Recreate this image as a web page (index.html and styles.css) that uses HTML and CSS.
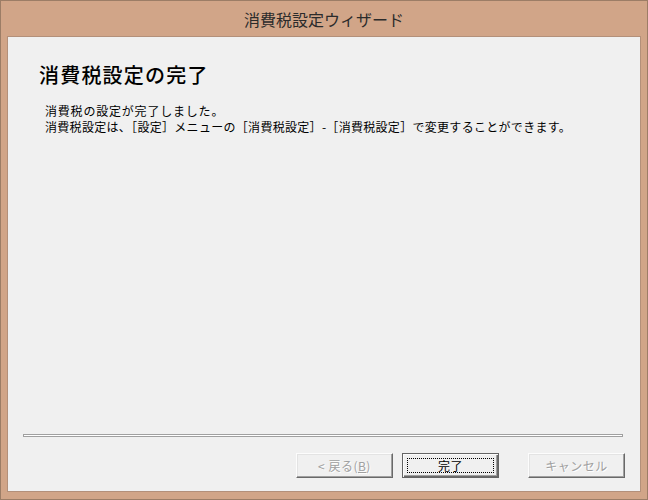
FILE: index.html
```
<!DOCTYPE html>
<html lang="ja">
<head>
<meta charset="utf-8">
<title>消費税設定ウィザード</title>
<link rel="stylesheet" href="styles.css">
</head>
<body>
<div class="window">
  <div class="titlebar">消費税設定ウィザード</div>
  <div class="client">
    <h1 class="heading">消費税設定の完了</h1>
    <div class="message">
      <p class="line1">消費税の設定が完了しました。</p>
      <p>消費税設定は、［設定］メニューの［消費税設定］-［消費税設定］で変更することができます。</p>
    </div>
    <div class="spacer"></div>
    <div class="separator"></div>
    <div class="buttons">
      <div class="btn disabled">&lt;&nbsp;戻る(<u>B</u>)</div>
      <div class="btn default"><span class="focus">完了</span></div>
      <div class="btn disabled cancel">キャンセル</div>
    </div>
  </div>
</div>
</body>
</html>
```
FILE: styles.css
```
html, body {
  margin: 0;
  padding: 0;
  background: #d1a588;
}
body {
  font-family: "Noto Sans CJK JP", "Liberation Sans", sans-serif;
  font-size: 12px;
  color: #000;
}
.window {
  box-sizing: border-box;
  width: 648px;
  height: 500px;
  border: 1px solid #9c7d66;
  background: #d1a588;
  padding: 0 6px 7px 6px;
  display: flex;
  flex-direction: column;
}
.titlebar {
  height: 35px;
  line-height: 36px;
  text-align: center;
  font-size: 16px;
  color: #2b2b2b;
}
.client {
  box-sizing: border-box;
  width: 634px;
  height: 456px;
  border: 1px solid #b3907a;
  background: #f0f0f0;
  display: flex;
  flex-direction: column;
}
.heading {
  margin: 26px 0 0 31px;
  font-size: 20px;
  line-height: 24px;
  font-weight: 500;
  letter-spacing: 1.2px;
}
.message {
  margin: 16px 0 0 37px;
  line-height: 16px;
  font-size: 12px;
}
.message p {
  margin: 0;
  letter-spacing: 0.3px;
}
.message p.line1 {
  letter-spacing: 0.8px;
}
.spacer {
  flex: 1;
}
.separator {
  height: 1px;
  margin: 0 15px;
  width: 598px;
  border: 1px solid #a0a0a0;
  background: #fff;
}
.buttons {
  display: flex;
  justify-content: flex-end;
  margin: 16px 15px 13px 0;
}
.btn {
  box-sizing: border-box;
  width: 97px;
  height: 25px;
  line-height: 23px;
  text-align: center;
  background: #f0f0f0;
  border: 1px solid;
  border-color: #fcfcfc #696969 #696969 #fcfcfc;
  box-shadow: inset -1px -1px 0 #a0a0a0, inset 1px 1px 0 #e3e3e3;
  font-size: 12px;
  letter-spacing: 0.5px;
  position: relative;
}
.btn + .btn {
  margin-left: 9px;
}
.btn.cancel {
  margin-left: 29px;
}
.btn.disabled {
  color: #a0a0a0;
  text-shadow: 1px 1px 0 #ffffff;
}
.btn.default {
  border: 1px solid #646464;
  box-shadow: inset 1px 1px 0 #fcfcfc, inset -1px -1px 0 #696969, inset -2px -2px 0 #a0a0a0;
}
.focus {
  position: absolute;
  left: 4px;
  top: 4px;
  right: 4px;
  bottom: 4px;
  border: 1px dotted #000;
  line-height: 13px;
}
```
